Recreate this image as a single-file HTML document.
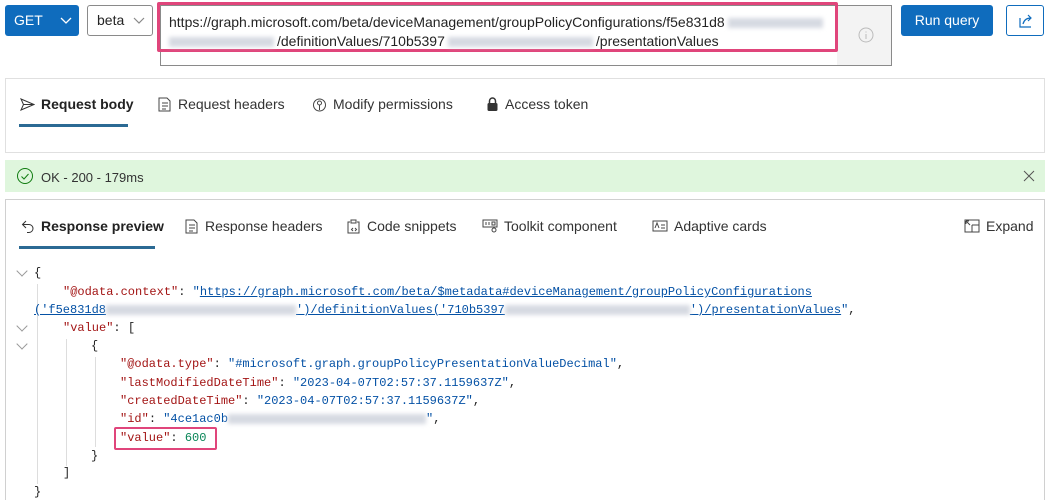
<!DOCTYPE html>
<html><head><meta charset="utf-8"><style>
*{box-sizing:border-box;margin:0;padding:0}
html,body{width:1051px;height:500px;overflow:hidden}
body{background:#fff;font-family:"Liberation Sans",sans-serif;color:#242424;position:relative;font-size:14px}
.abs{position:absolute}
.btn{position:absolute;border-radius:3px}
.blur{display:inline-block;height:10px;background:#d6dae2;filter:blur(2px);vertical-align:middle;margin:0 3px}
.tab{position:absolute;font-size:14px;color:#333;display:flex;align-items:center;gap:6px}
.mono{font-family:"Liberation Mono",monospace;font-size:12px;position:absolute;white-space:pre;color:#222}
.k{color:#a31515}.s{color:#0451a5}.n{color:#098658}
.u{text-decoration:underline;color:#0451a5}
.guide{position:absolute;width:1px;background:#ddd}
.chev{position:absolute;left:18px;width:8px;height:8px;border-right:1px solid #999;border-bottom:1px solid #999;transform:rotate(45deg)}
</style></head><body>
<div class="btn" style="left:5px;top:5px;width:74px;height:31px;background:#0f6cbd;color:#fff;font-size:14px;line-height:31px;padding-left:9px">GET<svg class="abs" style="left:55px;top:12px" width="12" height="8"><path d="M1 1l5 5 5-5" stroke="#fff" fill="none" stroke-width="1.3"/></svg></div>
<div class="btn" style="left:87px;top:5px;width:66px;height:31px;border:1px solid #8a8a8a;font-size:14px;line-height:29px;padding-left:9px">beta<svg class="abs" style="left:45px;top:11px" width="12" height="8"><path d="M1 1l5 5 5-5" stroke="#888" fill="none" stroke-width="1.2"/></svg></div>
<div class="abs" style="left:160px;top:5px;width:732px;height:61px;border:1px solid #8a8a8a;background:#fff"><div class="abs" style="right:0;top:0;width:54px;height:59px;background:#f3f3f3"></div>
<svg class="abs" style="left:697px;top:21px" width="16" height="16"><circle cx="8" cy="8" r="7" fill="none" stroke="#bbb"/><path d="M8 7v5M8 4.5v1" stroke="#bbb"/></svg></div>
<div class="abs" style="left:157px;top:2px;width:681px;height:50px;border:3px solid #e0457b;border-radius:2px"></div>
<div class="abs" style="left:169px;top:13px;font-size:14px;line-height:19px;white-space:nowrap">https://graph.microsoft.com/beta/deviceManagement/groupPolicyConfigurations/f5e831d8<span class="blur" style="width:95px"></span><br><span class="blur" style="width:105px;margin-left:0"></span>/definitionValues/710b5397<span class="blur" style="width:145px"></span>/presentationValues</div>
<div class="btn" style="left:901px;top:5px;width:92px;height:31px;background:#0f6cbd;color:#fff;line-height:31px;text-align:center">Run query</div>
<div class="btn" style="left:1006px;top:5px;width:38px;height:31px;border:1px solid #0f6cbd"><svg class="abs" style="left:11px;top:7px" width="16" height="16"><path d="M2 5v9h11M5 11c1-4 4-6 8-6M10 2l3 3-3 3" stroke="#0f6cbd" fill="none" stroke-width="1.2"/></svg></div>

<div class="abs" style="left:5px;top:78px;width:1040px;height:75px;border:1px solid #e0e0e0"></div>
<div class="tab" style="left:20px;top:96px;font-weight:bold;color:#222"><svg width="15" height="13"><path d="M1 1l13 5.5L1 12l2.5-5.5z M3.5 6.5h10" stroke="#333" fill="none"/></svg>Request body</div>
<div class="abs" style="left:19px;top:124px;width:109px;height:3px;background:#2b6a94"></div>
<div class="tab" style="left:158px;top:96px"><svg width="14" height="15"><path d="M1 1h8l3 3v10H1z M4 6h6M4 9h6M4 12h4" stroke="#444" fill="none"/></svg>Request headers</div>
<div class="tab" style="left:312px;top:96px"><svg width="15" height="15"><circle cx="7.5" cy="8" r="6" stroke="#444" fill="none"/><circle cx="7.5" cy="6" r="2" stroke="#444" fill="none"/><path d="M7.5 8v5" stroke="#444"/></svg>Modify permissions</div>
<div class="tab" style="left:486px;top:96px"><svg width="13" height="15"><path d="M3.5 6V4a3 3 0 016 0v2" stroke="#333" fill="none" stroke-width="1.5"/><rect x="1.5" y="6" width="10" height="8" rx="1.5" fill="#333"/></svg>Access token</div>

<div class="abs" style="left:5px;top:160px;width:1040px;height:32px;background:#dff6dd"></div>
<svg class="abs" style="left:16px;top:167px" width="18" height="18"><circle cx="9" cy="9" r="7.5" stroke="#107c10" fill="none"/><path d="M5.5 9.5l2.5 2.5 4.5-5" stroke="#107c10" fill="none"/></svg>
<div class="abs" style="left:41px;top:170px;font-size:13px;color:#333">OK - 200 - 179ms</div>
<svg class="abs" style="left:1023px;top:170px" width="12" height="12"><path d="M1 1l10 10M11 1L1 11" stroke="#555"/></svg>

<div class="abs" style="left:5px;top:199px;width:1040px;height:320px;border:1px solid #d0d0d0"></div>
<div class="tab" style="left:21px;top:218px;font-weight:bold;color:#222"><svg width="14" height="13"><path d="M5 1L1.5 4.5 5 8M1.5 4.5H8a4 4 0 010 8H6" stroke="#333" fill="none"/></svg>Response preview</div>
<div class="abs" style="left:19px;top:246px;width:136px;height:3px;background:#2b6a94"></div>
<div class="tab" style="left:185px;top:218px"><svg width="14" height="15"><path d="M1 1h8l3 3v10H1z M4 6h6M4 9h6M4 12h4" stroke="#444" fill="none"/></svg>Response headers</div>
<div class="tab" style="left:347px;top:218px"><svg width="14" height="15"><path d="M3 3H1v11h11V3h-2M4 1h5v3H4z M6 9l-1.5 1.5L6 12M8 9l1.5 1.5L8 12" stroke="#444" fill="none"/></svg>Code snippets</div>
<div class="tab" style="left:482px;top:218px"><svg width="16" height="14"><path d="M1 1h14v7H1z M4 3v3M7 3v3M10 3h3v3h-3z" stroke="#444" fill="none"/><circle cx="12" cy="11" r="2" stroke="#444" fill="none"/></svg>Toolkit component</div>
<div class="tab" style="left:652px;top:218px"><svg width="16" height="12"><rect x="1" y="1" width="14" height="10" stroke="#444" fill="none"/><path d="M3 8l2-5 2 5M9 5h4M9 8h4" stroke="#444" fill="none"/></svg>Adaptive cards</div>
<div class="tab" style="left:964px;top:218px"><svg width="16" height="14"><path d="M1 1h14v12H1z M8 6h7M8 6v7M2 2l4 4M2 2h3M2 2v3" stroke="#444" fill="none"/></svg>Expand</div>

<div class="chev" style="top:267px"></div>
<div class="chev" style="top:322px"></div>
<div class="chev" style="top:340px"></div>
<div class="guide" style="left:37px;top:284px;height:200px"></div>
<div class="guide" style="left:66px;top:339px;height:127px"></div>
<div class="guide" style="left:95px;top:357px;height:90px"></div>
<div class="mono" style="left:34px;top:266px">{</div>
<div class="mono" style="left:63px;top:285px"><span class="k">"@odata.context"</span>: <span class="s">"</span><span class="u">https://graph.microsoft.com/beta/$metadata#deviceManagement/groupPolicyConfigurations</span></div>
<div class="mono" style="left:34px;top:303px"><span class="u">('f5e831d8<span class="blur" style="width:190px;margin:0"></span>')/definitionValues('710b5397<span class="blur" style="width:185px;margin:0"></span>')/presentationValues</span><span class="s">"</span>,</div>
<div class="mono" style="left:63px;top:321px"><span class="k">"value"</span>: [</div>
<div class="mono" style="left:91px;top:339px">{</div>
<div class="mono" style="left:120px;top:357px"><span class="k">"@odata.type"</span>: <span class="s">"#microsoft.graph.groupPolicyPresentationValueDecimal"</span>,</div>
<div class="mono" style="left:120px;top:376px"><span class="k">"lastModifiedDateTime"</span>: <span class="s">"2023-04-07T02:57:37.1159637Z"</span>,</div>
<div class="mono" style="left:120px;top:394px"><span class="k">"createdDateTime"</span>: <span class="s">"2023-04-07T02:57:37.1159637Z"</span>,</div>
<div class="mono" style="left:120px;top:412px"><span class="k">"id"</span>: <span class="s">"4ce1ac0b<span class="blur" style="width:198px;margin:0"></span>"</span>,</div>
<div class="mono" style="left:120px;top:431px"><span class="k">"value"</span>: <span class="n">600</span></div>
<div class="abs" style="left:114px;top:427px;width:103px;height:23px;border:2px solid #e0457b;border-radius:2px"></div>
<div class="mono" style="left:91px;top:449px">}</div>
<div class="mono" style="left:63px;top:466px">]</div>
<div class="mono" style="left:34px;top:485px">}</div>
</body></html>
